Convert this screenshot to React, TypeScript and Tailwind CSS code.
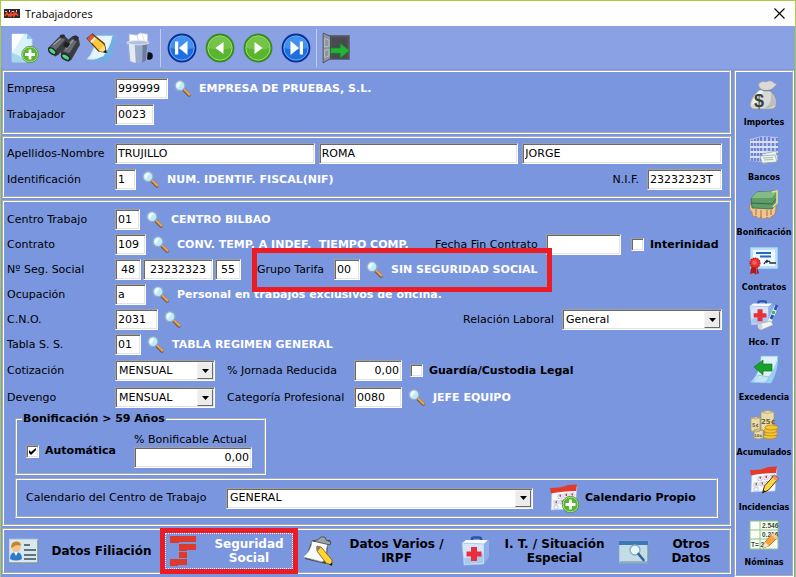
import type { ReactNode } from "react";
import clsx from "clsx";

const bevel =
  "border border-t-[#a0a0a0] border-l-[#a0a0a0] border-r-white border-b-white bg-white shadow-[inset_1px_1px_0_#696969,inset_-1px_-1px_0_#e3e3e3]";
const groove = "border-2 border-white [border-style:groove]";

function Panel({ className, children }: { className?: string; children: ReactNode }) {
  return <section className={clsx(groove, className)}>{children}</section>;
}

function Row({ className, children }: { className?: string; children: ReactNode }) {
  return <div className={clsx("flex h-[21px] items-center", className)}>{children}</div>;
}

function Label({ id, className, children }: { id: string; className?: string; children: ReactNode }) {
  return (
    <label htmlFor={id} className={clsx("shrink-0 whitespace-nowrap", className)}>
      {children}
    </label>
  );
}

function Box({ id, value, label, className }: { id: string; value: string; label?: string; className?: string }) {
  return (
    <input
      id={id}
      aria-label={label}
      defaultValue={value}
      className={clsx("h-[21px] min-w-0 px-0.5 pb-px outline-none", bevel, className)}
    />
  );
}

function Select({ id, value, className }: { id: string; value: string; className?: string }) {
  return (
    <div className={clsx("relative h-[21px]", bevel, className)}>
      <select id={id} className="h-full w-full appearance-none bg-transparent pl-[3px] pr-5 outline-none">
        <option>{value}</option>
      </select>
      <span className="pointer-events-none absolute top-px right-px bottom-px flex w-4 items-center justify-center border border-t-[#f4f4f4] border-l-[#f4f4f4] border-r-[#696969] border-b-[#696969] bg-[#ececec]">
        <svg width="7" height="4" viewBox="0 0 7 4">
          <path d="M0 0h7L3.500 4z" fill="#000" />
        </svg>
      </span>
    </div>
  );
}

function Check({ id, checked, children }: { id: string; checked?: boolean; children: ReactNode }) {
  return (
    <label htmlFor={id} className="flex items-center gap-1.5 font-bold whitespace-nowrap">
      <span className="relative flex">
        <input id={id} type="checkbox" defaultChecked={checked} className={clsx("peer size-[13px] appearance-none", bevel)} />
        <svg className="pointer-events-none absolute top-[3px] left-[3px] hidden peer-checked:block" width="7" height="7" viewBox="0 0 7 7">
          <path d="M0 2v3l2 2 5-5V0L2 4z" fill="#000" />
        </svg>
      </span>
      {children}
    </label>
  );
}

function Lookup({ name }: { name: string }) {
  return (
    <button type="button" aria-label={`Buscar ${name}`} className="mx-1.5 shrink-0">
      <svg width="17" height="17" viewBox="0 0 17 17">
        <path d="M9.500 9.500l5.500 5.500" stroke="#6d6054" strokeWidth="3.600" strokeLinecap="round" />
        <path d="M10.500 9.800l5 4.800" stroke="#eda04a" strokeWidth="2.200" strokeLinecap="round" />
        <circle cx="6" cy="5.700" r="5" fill="#bfeafa" stroke="#92a9c4" strokeWidth="1.300" />
        <path d="M2.500 6a3.500 3.500 0 0 1 5-3.500L4 8z" fill="#f2fdff" />
      </svg>
    </button>
  );
}

function Caption({ children }: { children: ReactNode }) {
  return <span className="ml-0.5 font-bold whitespace-pre text-white">{children}</span>;
}

/* ---------- icons ---------- */

function Icon({ size = 30, children }: { size?: number; children: ReactNode }) {
  return (
    <svg width={size} height={size} viewBox="0 0 30 30" fill="none" className="shrink-0">
      {children}
    </svg>
  );
}

const Plus = () => (
  <>
    <circle cx="21.500" cy="21.500" r="7.700" fill="#5cb531" stroke="#d7f0c8" />
    <circle cx="21.500" cy="21.500" r="8.200" stroke="#3c8f1e" strokeWidth=".8" />
    <path d="M21.500 16.500v10M16.500 21.500h10" stroke="#fff" strokeWidth="2.800" />
  </>
);

const Pencil = () => (
  <>
    <path d="M25.500 10l4 3.500-10 11.500-6 3 2-7z" fill="#ffd63c" stroke="#4a3a12" strokeWidth="1" />
    <path d="M25.500 10l4 3.500-2 2.500-4-3.500z" fill="#ef8a76" />
    <path d="M13.500 28l1-3.200 2.200 1.800z" fill="#222" />
  </>
);

const Medkit = () => (
  <>
    <path d="M11 6V3q0-1.500 2-1.500h5q2 0 2 1.500v3" stroke="#2b55a8" strokeWidth="2.500" />
    <path d="M1 7l4-3h22l-4 4z" fill="#f7fbff" />
    <path d="M1 7l22 1v20L3 29z" fill="#d5e6fa" stroke="#a9c3ea" strokeWidth=".7" />
    <path d="M23 8l5-4v17l-5 7z" fill="#8db1e4" />
    <path d="M3 22q10 0 19-5v10L4 28z" fill="#a9c8f0" />
    <path d="M10 11h6v4.500h4.500v5H16V25h-6v-4.500H5.500v-5H10z" fill="#e8303c" />
  </>
);

const Calendar = () => (
  <>
    <path d="M3 6l25-3-2 23-24 1z" fill="#f5f8fd" stroke="#b4c2dd" strokeWidth=".7" />
    <path d="M1 5q12 0 18-3l9-.5-1 6.500q-14 0-25 2.500z" fill="#e23b2a" />
    <path d="M9 12l4-.5v3.500l-4 .5zM15 11l4-.5V14l-4 .5zM21 10.500l4-.5v3.500l-4 .5zM5 18l4-.5V21l-4 .3zM11 17.300l4-.4v3.500l-4 .4zM17 16.700l4-.4v3.500l-4 .4zM5 23l4-.3V26H5z" fill="#fff" stroke="#a7b9e0" strokeWidth=".7" />
    <path d="M10.500 12.700h1.500M16.500 12h1.500M22.500 11.500H24M12.500 18.500H14M18.500 17.800H20M6.500 19.300H8" stroke="#e8302a" strokeWidth="2" />
  </>
);

const NewIcon = () => (
  <Icon>
    <path d="M1 1h15l5 5v23H1z" fill="#d9f1fa" stroke="#b4d9ec" strokeWidth=".8" />
    <path d="M1 1h12L1 20z" fill="#fff" />
    <path d="M1 20q9 2 13 9H1z" fill="#a6d9ee" />
    <path d="M16 1l5 5h-5z" fill="#8cc4e4" />
    <g transform="translate(-2.500 0)">
      <Plus />
    </g>
  </Icon>
);

const BinocularsIcon = () => (
  <Icon size={32}>
    <path d="M0 15L11 4l4-1 4 4-1 5-8 9-3 2-6-4z" fill="#3b3c40" />
    <path d="M12 19l7-12 4-3 6 3 1 5-8 14-3 2-6-3z" fill="#3b3c40" />
    <path d="M2 14L12 5l4 2-9 10zM14 18l8-11 5 2-7 11z" fill="#686b70" />
    <path d="M5 12l7-6M17 16l7-9" stroke="#9b9ea4" strokeWidth="1.200" />
    <path d="M16 9l5 2-3 4-4-2z" fill="#1f2023" />
    <path d="M11 3l3-1 2 1-1 2-3 1zM23 4l3-1 3 2-1 3-4-1z" fill="#2b2c30" />
    <ellipse cx="4" cy="18" rx="4" ry="2.300" transform="rotate(38 4 18)" fill="#48d98a" stroke="#24262a" strokeWidth="1.300" />
    <ellipse cx="16.500" cy="23.500" rx="4.200" ry="2.300" transform="rotate(32 16.500 23.500)" fill="#48d98a" stroke="#24262a" strokeWidth="1.300" />
  </Icon>
);

const EditIcon = () => (
  <Icon size={32}>
    <path d="M9 3h19q-1 13-8 24L0 26Q8 18 9 3z" fill="#d6edfb" stroke="#7cb2dc" strokeWidth=".8" />
    <path d="M28 3q0 13-8 25L1 27q14-1 18-9Q24 10 25 3z" fill="#6fb0e4" />
    <path d="M24 4q-1 10-8 19L3 25q7-7 8-21z" fill="#e6f6ff" />
    <path d="M1 6l5-4 11 9 2 8-7-1z" fill="#ffc93c" stroke="#5c3d0c" strokeWidth="1.200" />
    <path d="M1 6l4.500-4L8 4.500 3.500 9z" fill="#d9534a" />
    <path d="M4 9l4-4 1.200 1-4 4.300z" fill="#f5efe4" />
    <path d="M12 18l5-6 2 7z" fill="#ffe08a" />
    <path d="M16 18.700l2.500-2 .7 3z" fill="#111" />
  </Icon>
);

const TrashIcon = () => (
  <Icon size={32}>
    <ellipse cx="23.500" cy="22.500" rx="3.500" ry="3.500" fill="#0b0f1c" />
    <path d="M5 9V2l7 1 3-2 7 1v7z" fill="#fff" stroke="#c6cedb" strokeWidth=".7" />
    <path d="M12 3l2 6M17 2l2 6" stroke="#ccd2de" strokeWidth=".8" />
    <path d="M3 9h20l-1.500 18q-8.500 4-17 0z" fill="#9aabc9" />
    <path d="M4.500 11H10l1 18-5-1.500z" fill="#e3eaf4" />
    <path d="M17.500 11H22l-1.500 16-3.500 1.500z" fill="#6b7da3" />
    <ellipse cx="13" cy="10" rx="10.500" ry="2" fill="#b4c3dc" stroke="#e0e8f3" strokeWidth=".8" />
  </Icon>
);

function NavIcon({ green, children }: { green?: boolean; children: ReactNode }) {
  return (
    <Icon>
      <circle cx="15" cy="15" r="13.500" fill={green ? "#59b52c" : "#1d6fe0"} stroke={green ? "#3a8a22" : "#0b2f96"} strokeWidth="1.800" />
      <path d="M3.500 15a11.500 11.500 0 0 1 23 0q-11 3-23 0z" fill={green ? "#86cf5a" : "#5ca9f5"} opacity=".6" />
      <circle cx="15" cy="15" r="12.100" stroke={green ? "#b8e59c" : "#8cc4fa"} strokeWidth=".7" />
      {children}
    </Icon>
  );
}

const DoorIcon = () => (
  <Icon size={32}>
    <path d="M2 3h24v23H2z" fill="#54575b" />
    <path d="M9 5h15v20H9z" fill="#484b4f" />
    <path d="M1 1l7 3v21l-7 4z" fill="#8d949c" stroke="#3e4347" strokeWidth=".7" />
    <path d="M2.500 6l4 1.500v6l-4 .5zM2.500 17l4-.5v6l-4 1.500z" stroke="#c5cad0" strokeWidth=".7" />
    <path d="M8 15h9v-4.500l9 7-9 7V20H8z" fill="#23b437" stroke="#167a25" strokeWidth=".7" />
  </Icon>
);

const MoneyBag = () => (
  <Icon>
    <path d="M12 9q-4-3-2-6 4-3 7-1 5-3 8 1l3 1-7 7q7 6 6 13 0 5-6 5H6q-5 0-5-5Q3 15 12 9z" fill="#d9d9d9" stroke="#9a9a9a" strokeWidth=".7" />
    <path d="M12 9Q4 16 3 25l8-5 3-9z" fill="#f2f2f2" />
    <path d="M22 12q5 7 4 13-5 4-10 3 8-5 6-16z" fill="#bdbdbd" />
    <path d="M11 9.500q6 2 12 .5" stroke="#888" strokeWidth="1.300" />
    <text x="5" y="27" fontSize="18" fontFamily="Liberation Sans" fontWeight="bold" fill="#344638">$</text>
  </Icon>
);

const Bank = () => (
  <Icon>
    <path d="M1 4l12-3v26L1 26zM13 1l16 1v22l-16 3z" fill="#b0bef2" />
    <path d="M3 5v21M6 4v22M9 3v23M12 2v24M16 2v24M20 2v23M24 3v20M28 3v17" stroke="#6478c6" strokeWidth="1.700" />
    <path d="M1 7h28M1 12h28M1 17h28M1 22h20" stroke="#dae2fb" strokeWidth="1.900" />
    <path d="M13 19l14-3 2 9-15 4z" fill="#e9f0ee" stroke="#91a3a3" strokeWidth=".7" />
    <path d="M11 21l15-1 2 7-15 1z" fill="#eef4f2" stroke="#91a3a3" strokeWidth=".7" />
    <path d="M14 23l10-.5M15 25l9-.5" stroke="#9bb0ad" strokeWidth=".9" />
  </Icon>
);

const CashHand = () => (
  <Icon>
    <path d="M2 14q-4 4 1 8 0 6 4 4 2 4 5 1 3 4 6 0 3 3 5-1 4 0 4-10z" fill="#f0c493" stroke="#a87642" strokeWidth=".7" />
    <path d="M2 8l6-6 20-1v13l-5 5-20-1z" fill="#5e9c68" stroke="#37613f" strokeWidth=".7" />
    <path d="M2 8l6-6 20-1-5 7z" fill="#82bb84" />
    <path d="M2 13l21 1 5-6" stroke="#37613f" strokeWidth=".9" />
    <path d="M23 2l5-1v12l-4 4" stroke="#e3e38b" strokeWidth="1.700" />
    <path d="M7 19v6M12 20v7M18 20v6M22 20v5" stroke="#9a6a38" strokeWidth=".9" />
  </Icon>
);

const Certificate = () => (
  <Icon>
    <path d="M1 2h28v22H1z" fill="#bddff7" stroke="#6ba6da" strokeWidth=".8" />
    <path d="M4 5h22v16H4z" fill="#eef8ff" />
    <path d="M7 8h15M11 11.500h11" stroke="#2469c9" strokeWidth="2" />
    <path d="M15 19q4-6 3-2 3-2 3 1h6" stroke="#202a3c" strokeWidth="1.300" />
    <path d="M3 19l-2 10 4-1 2 2 2-9zM8 20l2 9-3-1z" fill="#b81619" />
    <circle cx="6" cy="18" r="5" fill="#ea3030" stroke="#b81619" strokeWidth="1.200" strokeDasharray="1.500 .8" />
    <circle cx="5.500" cy="17.500" r="2.300" fill="#f6635a" />
  </Icon>
);

const SickLeave = () => (
  <Icon>
    <g transform="scale(.85)">
      <Medkit />
    </g>
    <path d="M27 7l-6 14" stroke="#eef4fb" strokeWidth="4" strokeLinecap="round" />
    <path d="M28 5l-2 5M24 15l-2 4" stroke="#2a57b5" strokeWidth="3" />
    <path d="M25 11l-1 3" stroke="#3eb653" strokeWidth="3" />
    <path d="M9 24l13-3 2 4-12 5q-4-1-3-6z" fill="#f4f4f4" stroke="#a6a6a6" strokeWidth=".7" />
    <ellipse cx="11.500" cy="26.500" rx="2" ry="2.700" fill="#d0d3d8" />
  </Icon>
);

const Leave = () => (
  <Icon>
    <path d="M12 1h17q-1 15-7 27L1 27q9-5 11-26z" fill="#dff2fc" stroke="#80b8df" strokeWidth=".8" />
    <path d="M29 2q0 15-7 26l-9-1q10-5 16-25z" fill="#9dcff0" />
    <path d="M1 27q6-1 8-7l11 2q-1 5-5 6z" fill="#c3e4f6" stroke="#80b8df" strokeWidth=".7" />
    <path d="M5 12l9-7v4h9v7h-9v4z" fill="#16a22c" stroke="#0b7a1d" strokeWidth=".7" />
  </Icon>
);

const Coins = () => (
  <Icon>
    <path d="M12 2q7-3 13 0v18q-6 3-13 0zM2 8q5-2 9 0v13q-4 2-9 0zM5 20q4-2 9 0v8q-4 2-9 0z" fill="#e8dcae" stroke="#ad9c60" strokeWidth=".8" />
    <path d="M12 2q6 3 13 0M2 8q5 2 9 0M5 20q4 2 9 0" stroke="#b6a569" strokeWidth=".8" />
    <text x="12" y="14" fontSize="7" fontFamily="DejaVu Sans" fontWeight="bold" fill="#6f6232">25¢</text>
    <text x="3" y="17" fontSize="5" fontFamily="DejaVu Sans" fill="#6f6232">5¢</text>
    <text x="5" y="27" fontSize="4" fontFamily="DejaVu Sans" fill="#6f6232">10¢</text>
    <g fill="#f5c62f" stroke="#ba861a" strokeWidth=".8">
      <ellipse cx="21" cy="26.500" rx="6.500" ry="2.500" />
      <ellipse cx="22" cy="23.500" rx="6.500" ry="2.500" />
      <ellipse cx="21.500" cy="20.500" rx="6.500" ry="2.500" />
      <ellipse cx="22.500" cy="17.500" rx="6.500" ry="2.500" />
    </g>
  </Icon>
);

const Incidents = () => (
  <Icon>
    <Calendar />
    <Pencil />
  </Icon>
);

const Payroll = () => (
  <Icon>
    <path d="M1 1h28v28H1z" fill="#f8fdf5" stroke="#92c387" />
    <path d="M1 10h28M1 19h28M11 1v28" stroke="#92c387" />
    <g fontFamily="Liberation Sans" fontSize="6.500" fill="#3b4d38">
      <text x="13" y="8">2.546</text>
      <text x="13" y="17">0.216</text>
      <text x="2" y="27">T= 2</text>
    </g>
    <path d="M24 13l5 4-9 9-6 2 2-6z" fill="#f6a33c" stroke="#9c6020" strokeWidth=".7" />
    <path d="M14 28l2-6 4 4z" fill="#ffe7bd" />
    <path d="M24 13l5 4-2 2-5-4z" fill="#f3cdb3" />
  </Icon>
);

const CardIcon = () => (
  <Icon>
    <path d="M0 3h29v24H0z" fill="#d8e8ec" stroke="#a8bcc6" strokeWidth=".8" />
    <path d="M0 27h29V4" stroke="#6f8597" strokeWidth="1.200" />
    <path d="M1 23q0-7 6-7t6 7q-6 3-12 0z" fill="#2e7bc9" />
    <path d="M5 16l2 4 2-4z" fill="#fff" />
    <circle cx="7" cy="11.500" r="4.600" fill="#f3c390" />
    <path d="M2 12q0-6.500 5-6.500 5 0 5 4-6-1-7 1z" fill="#c98427" />
    <path d="M15 9h6M15 14h12M15 19h12M15 23h12" stroke="#61747d" strokeWidth="2" />
  </Icon>
);

const SocialSecurityIcon = () => (
  <svg width="26" height="30" viewBox="0 0 26 30" className="shrink-0">
    <path d="M0 0h26v6H9v1H0zM9 8h17v6h-9v1H9zM9 16h8v6H9zM0 23h17v6H8v1H0z" fill="#dc3a2c" />
  </svg>
);

const NotesIcon = () => (
  <Icon>
    <path d="M9 4h18l1 4-3 1-2 19-21-5z" fill="#3f454c" />
    <path d="M9 5l16 2q-3 8-1 16l-5 3-19-5Q8 15 9 5z" fill="#fafafa" stroke="#8d9298" strokeWidth=".7" />
    <path d="M10 5q6-1 8-4h4l1 3 5 2-1 3z" fill="#9ba2a9" stroke="#40464d" strokeWidth=".8" />
    <path d="M14 10l4 1 11 13v5l-6-2-9-12z" fill="#ffd52f" stroke="#72550d" strokeWidth=".8" />
    <path d="M14 10l4 1-3 4q-3-3-1-5z" fill="#8d7a70" />
    <path d="M26 29l3-2.500V29.500z" fill="#111" />
  </Icon>
);

const OtherIcon = () => (
  <Icon>
    <path d="M0 5h29v22H0z" fill="#c3dde7" stroke="#8eb1c4" strokeWidth=".8" />
    <path d="M0 5h29v4H0z" fill="#3c78b5" />
    <path d="M1 26h28V9" stroke="#728d9d" />
    <circle cx="16" cy="14" r="5" fill="#e6f7fc" stroke="#8ba8ba" strokeWidth="1.300" />
    <path d="M19.500 18l5 6" stroke="#3b5d9c" strokeWidth="2.600" strokeLinecap="round" />
  </Icon>
);

const toolbar = [
  [
    { name: "Nuevo", icon: <NewIcon /> },
    { name: "Buscar", icon: <BinocularsIcon /> },
    { name: "Modificar", icon: <EditIcon /> },
    { name: "Borrar", icon: <TrashIcon /> },
  ],
  [
    { name: "Primero", icon: <NavIcon><path d="M8 8.500h3.200v13H8zM20.500 8v14l-8.500-7z" fill="#fff" /></NavIcon> },
    { name: "Anterior", icon: <NavIcon green><path d="M18.500 9v12l-8-6z" fill="#fff" /></NavIcon> },
    { name: "Siguiente", icon: <NavIcon green><path d="M11.500 9v12l8-6z" fill="#fff" /></NavIcon> },
    { name: "Último", icon: <NavIcon><path d="M18.800 8.500H22v13h-3.200zM9.500 8v14l8.500-7z" fill="#fff" /></NavIcon> },
  ],
  [{ name: "Salir", icon: <DoorIcon /> }],
];

const sidebar = [
  { name: "Importes", icon: <MoneyBag /> },
  { name: "Bancos", icon: <Bank /> },
  { name: "Bonificación", icon: <CashHand /> },
  { name: "Contratos", icon: <Certificate /> },
  { name: "Hco. IT", icon: <SickLeave /> },
  { name: "Excedencia", icon: <Leave /> },
  { name: "Acumulados", icon: <Coins /> },
  { name: "Incidencias", icon: <Incidents /> },
  { name: "Nóminas", icon: <Payroll /> },
];

const tabs = [
  { lines: ["Datos Filiación"], icon: <CardIcon /> },
  { lines: ["Seguridad", "Social"], icon: <SocialSecurityIcon />, active: true },
  { lines: ["Datos Varios /", "IRPF"], icon: <NotesIcon /> },
  { lines: ["I. T. / Situación", "Especial"], icon: <Icon><Medkit /></Icon> },
  { lines: ["Otros", "Datos"], icon: <OtherIcon /> },
];

function TitleBar() {
  return (
    <header className="flex h-[25px] items-center bg-white pl-[3px] pr-2.5">
      <svg width="16" height="9" viewBox="0 0 16 9">
        <path d="M0 0h16v9H0z" fill="#26282b" />
        <path d="M1 2h2v1H1zM5 1h1v2H5zM8 2h2v1H8zM12 1h1v2h-1z" fill="#ccc" />
        <path d="M1 7l2-3 2 3 2-3v3l3-3v3l2-3 2 3" stroke="#f0442c" strokeWidth="1.600" fill="none" />
      </svg>
      <h1 className="ml-[5px] font-['Open_Sans',sans-serif] text-[11px]">Trabajadores</h1>
      <button type="button" aria-label="Cerrar" className="ml-auto">
        <svg width="11" height="11" viewBox="0 0 11 11">
          <path d="M.5.5l10 10M10.500.5l-10 10" stroke="#000" strokeWidth="1.100" />
        </svg>
      </button>
    </header>
  );
}

function Toolbar() {
  return (
    <nav className="flex h-[43px] items-center rounded-l bg-[#8aa2e3] pl-1.5">
      {toolbar.map((group, i) => (
        <div key={i} className={clsx("flex items-center", i > 0 && "ml-px h-[38px] border-l border-[#c5cdea] pl-0.5")}>
          {group.map((item) => (
            <button key={item.name} type="button" aria-label={item.name} className="flex w-[38px] justify-center">
              {item.icon}
            </button>
          ))}
        </div>
      ))}
    </nav>
  );
}

export default function App() {
  return (
    <div className="min-h-screen border-x border-t border-[#a9cb45] bg-[#7a96df] font-['DejaVu_Sans',sans-serif] text-[11px] leading-[14px] text-black">
      <TitleBar />
      <Toolbar />
      <div className="flex gap-[3px] px-px pt-px">
        <main className="flex min-w-0 flex-1 flex-col gap-0.5">
          <Panel className="flex flex-col gap-[5px] px-[3px] pt-1.5 pb-[7px]">
            <Row>
              <Label id="empresa" className="w-[108px]">Empresa</Label>
              <Box id="empresa" value="999999" className="w-[53px]" />
              <Lookup name="empresa" />
              <Caption>EMPRESA DE PRUEBAS, S.L.</Caption>
            </Row>
            <Row>
              <Label id="trabajador" className="w-[108px]">Trabajador</Label>
              <Box id="trabajador" value="0023" className="w-[39px]" />
            </Row>
          </Panel>

          <Panel className="flex flex-col gap-[5px] pt-[5px] pr-[7px] pb-1.5 pl-[3px]">
            <Row>
              <Label id="apellido1" className="w-[108px]">Apellidos-Nombre</Label>
              <div className="flex flex-1 gap-1">
                <Box id="apellido1" value="TRUJILLO" className="flex-1" />
                <Box id="apellido2" label="Segundo apellido" value="ROMA" className="flex-1" />
                <Box id="nombre" label="Nombre" value="JORGE" className="flex-1" />
              </div>
            </Row>
            <Row>
              <Label id="ident" className="w-[108px]">Identificación</Label>
              <Box id="ident" value="1" className="w-[21px]" />
              <Lookup name="identificación" />
              <Caption>NUM. IDENTIF. FISCAL(NIF)</Caption>
              <Label id="nif" className="mr-2 ml-auto">N.I.F.</Label>
              <Box id="nif" value="23232323T" className="w-[75px]" />
            </Row>
          </Panel>

          <Panel className="flex flex-col gap-1 pt-[7px] pr-[7px] pb-1.5 pl-[3px]">
            <Row>
              <Label id="centro" className="w-[108px]">Centro Trabajo</Label>
              <Box id="centro" value="01" className="w-[25px]" />
              <Lookup name="centro" />
              <Caption>CENTRO BILBAO</Caption>
            </Row>
            <Row>
              <Label id="contrato" className="w-[108px]">Contrato</Label>
              <Box id="contrato" value="109" className="w-[31px]" />
              <Lookup name="contrato" />
              <Caption>{"CONV. TEMP. A INDEF.  TIEMPO COMP."}</Caption>
              <div className="ml-auto flex items-center">
                <Label id="fin" className="w-[111px]">Fecha Fin Contrato</Label>
                <Box id="fin" value="" className="mr-2.5 w-[75px]" />
                <div className="w-[91px]">
                  <Check id="interinidad">Interinidad</Check>
                </div>
              </div>
            </Row>
            <Row>
              <Label id="nss" className="w-[108px]">Nº Seg. Social</Label>
              <div className="flex w-[142px] gap-0.5">
                <Box id="nss" value="48" className="w-[26px] text-center" />
                <Box id="nss2" label="Número" value="23232323" className="w-[70px] text-center" />
                <Box id="nss3" label="Dígitos de control" value="55" className="w-[26px] text-center" />
              </div>
              <div className="relative flex items-center pr-[9px]">
                <Label id="tarifa" className="w-[77px]">Grupo Tarifa</Label>
                <Box id="tarifa" value="00" className="w-[26px]" />
                <Lookup name="tarifa" />
                <Caption>SIN SEGURIDAD SOCIAL</Caption>
                <span className="pointer-events-none absolute -inset-x-[5px] -top-[11px] -bottom-3 z-10 border-[5px] border-[#ed1c24]" />
              </div>
            </Row>
            <Row>
              <Label id="ocupacion" className="w-[108px]">Ocupación</Label>
              <Box id="ocupacion" value="a" className="w-[31px]" />
              <Lookup name="ocupación" />
              <Caption>Personal en trabajos exclusivos de oficina.</Caption>
            </Row>
            <Row>
              <Label id="cno" className="w-[108px]">C.N.O.</Label>
              <Box id="cno" value="2031" className="w-[43px]" />
              <Lookup name="C.N.O." />
              <Label id="relacion" className="mr-2 ml-auto">Relación Laboral</Label>
              <Select id="relacion" value="General" className="w-40" />
            </Row>
            <Row>
              <Label id="tabla" className="w-[108px]">Tabla S. S.</Label>
              <Box id="tabla" value="01" className="w-[26px]" />
              <Lookup name="tabla" />
              <Caption>TABLA REGIMEN GENERAL</Caption>
            </Row>
            <Row className="mt-px">
              <Label id="cotizacion" className="w-[108px]">Cotización</Label>
              <Select id="cotizacion" value="MENSUAL" className="w-[100px]" />
              <Label id="jornada" className="ml-3 w-[127px]">% Jornada Reducida</Label>
              <Box id="jornada" value="0,00" className="mr-2 w-12 text-right" />
              <Check id="guardia">Guardía/Custodia Legal</Check>
            </Row>
            <Row className="mt-0.5">
              <Label id="devengo" className="w-[108px]">Devengo</Label>
              <Select id="devengo" value="MENSUAL" className="w-[100px]" />
              <Label id="categoria" className="ml-3 w-[127px]">Categoría Profesional</Label>
              <Box id="categoria" value="0080" className="w-12" />
              <Lookup name="categoría" />
              <Caption>JEFE EQUIPO</Caption>
            </Row>

            <fieldset className={clsx("ml-2 h-[63px] w-[251px] pl-[9px]", groove)}>
              <legend className="-ml-1 px-px font-bold">Bonificación &gt; 59 Años</legend>
              <div className="flex h-[42px] items-end gap-[18px]">
                <div className="pb-2.5">
                  <Check id="automatica" checked>Automática</Check>
                </div>
                <div className="flex flex-col">
                  <Label id="bonificable">% Bonificable Actual</Label>
                  <Box id="bonificable" value="0,00" className="w-[118px] text-right" />
                </div>
              </div>
            </fieldset>

            <Panel className="-mt-px mr-1 ml-2 flex h-10 items-center px-[9px]">
              <Label id="calendario" className="w-[200px]">Calendario del Centro de Trabajo</Label>
              <Select id="calendario" value="GENERAL" className="flex-1" />
              <button type="button" className="ml-4 flex items-center gap-1.5 pr-1 font-bold whitespace-nowrap">
                <Icon>
                  <Calendar />
                  <Plus />
                </Icon>
                <span className="w-[118px] text-left">Calendario Propio</span>
              </button>
            </Panel>
          </Panel>

          <Panel className="grid h-[46px] grid-cols-[156fr_138fr_158fr_158fr_115fr]">
            {tabs.map((tab) => (
              <button
                key={tab.lines[0]}
                type="button"
                className={clsx(
                  "relative flex min-w-0 items-center text-[12px] leading-[14px] font-bold",
                  tab.active ? "pl-2.5 text-white" : "pl-[5px]"
                )}
              >
                {tab.icon}
                <span className="flex-1 pl-1 whitespace-nowrap">
                  {tab.lines.map((line) => (
                    <span key={line} className="block">{line}</span>
                  ))}
                </span>
                {tab.active && (
                  <span className="pointer-events-none absolute inset-x-0 -inset-y-0.5 border-[5px] border-[#ed1c24]">
                    <span className="block h-full border border-dotted border-white" />
                  </span>
                )}
              </button>
            ))}
          </Panel>
        </main>

        <aside className={clsx("flex w-[60px] shrink-0 flex-col pt-2", groove)}>
          {sidebar.map((item) => (
            <button key={item.name} type="button" className="flex h-[55px] flex-col items-center gap-[7px] text-[8px] leading-3 font-bold whitespace-nowrap">
              {item.icon}
              {item.name}
            </button>
          ))}
        </aside>
      </div>
    </div>
  );
}
